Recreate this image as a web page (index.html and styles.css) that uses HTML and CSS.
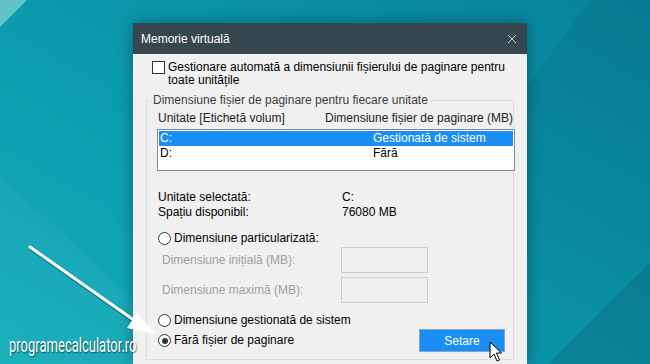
FILE: index.html
```html
<!DOCTYPE html>
<html>
<head>
    <title>Memorie virtuală</title>
    <meta charset="utf-8">
    <link rel="stylesheet" href="styles.css">
</head>
<body>
    <svg class="wallpaper" width="650" height="364" viewBox="0 0 650 364">
        <defs>
            <linearGradient id="wall" x1="0" y1="1" x2="1" y2="0">
                <stop offset="0" stop-color="#13adbb"/>
                <stop offset="0.5" stop-color="#0c9aae"/>
                <stop offset="1" stop-color="#07829a"/>
            </linearGradient>
        </defs>
        <rect width="650" height="364" fill="url(#wall)"/>
        <polygon points="0,0 27,0 0,27" fill="#62c3c8"/>
        <polygon points="0,175 133,300 133,364 0,364" fill="rgba(255,255,255,0.04)"/>
        <polygon points="590,0 650,0 650,364 325,364" fill="rgba(0,40,70,0.09)"/>
        <polygon points="650,263 650,364 548,364" fill="rgba(0,30,60,0.12)"/>
    </svg>

    <div class="window">
        <div class="titlebar">
            <span>Memorie virtuală</span>
            <svg class="close" width="10" height="10" viewBox="0 0 10 10">
                <path d="M1 1 L9 9 M9 1 L1 9" stroke="#c9cfd2" stroke-width="1"/>
            </svg>
        </div>
        <div class="content">
            <div class="check-row">
                <span class="checkbox"></span>
                <span class="check-text">Gestionare automată a dimensiunii fișierului de paginare pentru<br>toate unitățile</span>
            </div>

            <fieldset class="group">
                <legend>Dimensiune fișier de paginare pentru fiecare unitate</legend>
                <div class="cols">
                    <span class="col-drive">Unitate [Etichetă volum]</span>
                    <span>Dimensiune fișier de paginare (MB)</span>
                </div>
                <div class="list">
                    <div class="list-row selected"><span class="drive">C:</span><span>Gestionată de sistem</span></div>
                    <div class="list-row"><span class="drive">D:</span><span>Fără</span></div>
                </div>

                <div class="info">
                    <div class="info-row"><span class="info-key">Unitate selectată:</span><span>C:</span></div>
                    <div class="info-row"><span class="info-key">Spațiu disponibil:</span><span>76080 MB</span></div>
                </div>

                <div class="radio-row custom"><span class="radio"></span>Dimensiune particularizată:</div>
                <div class="field-row"><span class="field-label">Dimensiune inițială (MB):</span><span class="field"></span></div>
                <div class="field-row second"><span class="field-label">Dimensiune maximă (MB):</span><span class="field"></span></div>

                <div class="radio-row managed"><span class="radio"></span>Dimensiune gestionată de sistem</div>
                <div class="bottom-row">
                    <div class="radio-row"><span class="radio checked"></span>Fără fișier de paginare</div>
                    <button class="btn">Setare</button>
                </div>
            </fieldset>
        </div>
    </div>

    <!-- adnotari peste captura -->
    <svg class="arrow" width="170" height="110" viewBox="0 0 170 110">
        <line x1="30" y1="18" x2="138" y2="94" stroke="rgba(0,0,0,0.25)" stroke-width="4"/>
        <line x1="30" y1="17" x2="138" y2="93" stroke="#ffffff" stroke-width="3" stroke-linecap="round"/>
        <polygon points="156,104 137,83 127,98" fill="#ffffff"/>
    </svg>
    <div class="watermark">programecalculator.ro</div>
    <svg class="cursor" width="14" height="22" viewBox="0 0 14 22">
        <path d="M1 1 L1 17 L5 13 L8 20 L10.5 19 L7.5 12 L12.5 12 Z" fill="#ffffff" stroke="#000000" stroke-width="1" stroke-linejoin="miter"/>
    </svg>
</body>
</html>
```

FILE: styles.css
```css
body {
    margin: 0;
    width: 650px;
    height: 364px;
    overflow: hidden;
    position: relative;
    font-family: "Liberation Sans", Arial, sans-serif;
    font-size: 12px;
    color: #000;
}
.wallpaper {
    position: absolute;
    top: 0;
    left: 0;
    z-index: -1;
}
.window {
    margin: 23px 0 0 133px;
    width: 394px;
    height: 341px;
    background: #f0f0f0;
    box-shadow: 0 0 14px rgba(0,0,0,0.35);
    overflow: hidden;
}
.titlebar {
    height: 31px;
    background: #37474f;
    color: #fff;
    display: flex;
    align-items: center;
    justify-content: space-between;
    padding: 0 10px 0 8px;
}
.close {
    display: block;
}
.content {
    padding: 7px 13px 0 13px;
}
.check-row {
    display: flex;
    margin-left: 6px;
    line-height: 13px;
}
.checkbox {
    width: 11px;
    height: 11px;
    border: 1px solid #333;
    background: #fff;
    flex-shrink: 0;
    margin-right: 3px;
}
.group {
    margin: 6px 0 0 0;
    padding: 0 0 7px 11px;
    border: 1px solid #dcdcdc;
    min-width: 0;
}
.group legend {
    padding: 0 2px;
    margin-left: -7px;
    line-height: 14px;
    color: #3c3c3c;
}
.cols {
    display: flex;
    margin-top: 4px;
    line-height: 15px;
    color: #222;
    white-space: nowrap;
}
.col-drive {
    width: 167px;
    flex-shrink: 0;
}
.list {
    margin: 3px -2px 0 -1px;
    border: 1px solid #828790;
    background: #fff;
    padding: 1px 1px 0 1px;
    height: 39px;
}
.list-row {
    display: flex;
    height: 15px;
    line-height: 15px;
}
.list-row.selected {
    background: #1a8ef4;
    color: #fff;
}
.drive {
    width: 213px;
    padding-left: 1px;
}
.info {
    margin-top: 19px;
}
.info-row {
    display: flex;
    line-height: 15px;
}
.info-key {
    width: 184px;
}
.radio-row {
    display: flex;
    align-items: center;
    line-height: 15px;
}
.radio-row.custom {
    margin-top: 11px;
}
.radio-row.managed {
    margin-top: 10px;
}
.radio {
    width: 11px;
    height: 11px;
    border: 1px solid #333;
    border-radius: 50%;
    background: #fff;
    margin-right: 3px;
    display: flex;
    align-items: center;
    justify-content: center;
}
.radio.checked::after {
    content: "";
    width: 6px;
    height: 6px;
    border-radius: 50%;
    background: #333;
}
.field-row {
    display: flex;
    align-items: center;
    padding-left: 4px;
    margin-top: 1px;
    color: #a0a0a0;
}
.field-row.second {
    margin-top: 4px;
}
.field-label {
    width: 179px;
}
.field {
    width: 85px;
    height: 24px;
    border: 1px solid #cccccc;
    background: #f0f0f0;
}
.bottom-row {
    display: flex;
    align-items: center;
    justify-content: space-between;
    margin-top: 1px;
    padding-right: 8px;
}
.btn {
    width: 86px;
    height: 23px;
    background: #1a8ef4;
    border: 1px solid #8aa4bc;
    color: #fff;
    font-family: inherit;
    font-size: 12px;
    padding: 0;
}
.arrow {
    position: absolute;
    left: 0;
    top: 230px;
}
.watermark {
    position: absolute;
    left: 9px;
    top: 333px;
    color: #fff;
    font-family: Roboto, sans-serif;
    font-size: 21px;
    text-shadow: 1px 1px 2px rgba(0,0,0,0.6);
    transform: scaleX(0.62);
    transform-origin: left top;
}
.cursor {
    position: absolute;
    left: 489px;
    top: 341px;
}
```
